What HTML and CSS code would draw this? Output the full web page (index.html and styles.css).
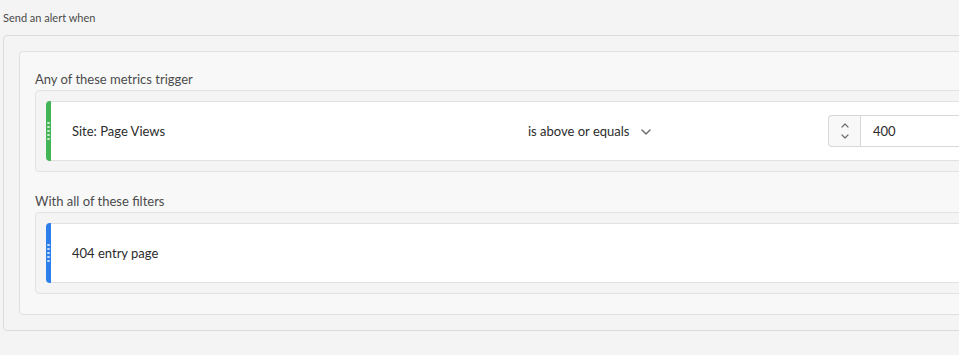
FILE: index.html
```html
<!DOCTYPE html>
<html>
<head>
<meta charset="utf-8">
<link rel="stylesheet" href="styles.css">
</head>
<body>
<div class="page">
  <div class="heading">Send an alert when</div>
  <div class="outer">
    <div class="inner">
      <div class="section-title first">Any of these metrics trigger</div>
      <div class="well">
        <div class="card">
          <div class="grip green"><span></span><span></span><span></span><span></span><span></span></div>
          <div class="card-label">Site: Page Views</div>
          <div class="dropdown">
            <span>is above or equals</span>
            <svg class="chev" width="10" height="6" viewBox="0 0 10 6"><path d="M1 1l4 4 4-4" fill="none" stroke="#6e6e6e" stroke-width="1.5" stroke-linecap="round" stroke-linejoin="round"/></svg>
          </div>
          <div class="stepper">
            <div class="step-btns">
              <svg width="8" height="5" viewBox="0 0 8 5"><path d="M1 4l3-3 3 3" fill="none" stroke="#6e6e6e" stroke-width="1.2" stroke-linecap="round" stroke-linejoin="round"/></svg>
              <svg width="8" height="5" viewBox="0 0 8 5"><path d="M1 1l3 3 3-3" fill="none" stroke="#6e6e6e" stroke-width="1.2" stroke-linecap="round" stroke-linejoin="round"/></svg>
            </div>
            <div class="step-input">400</div>
          </div>
        </div>
      </div>
      <div class="section-title">With all of these filters</div>
      <div class="well">
        <div class="card">
          <div class="grip blue"><span></span><span></span><span></span><span></span><span></span></div>
          <div class="card-label">404 entry page</div>
        </div>
      </div>
    </div>
  </div>
</div>
</body>
</html>
```
FILE: styles.css
```css
html, body {
  margin: 0;
  padding: 0;
  background: #f4f4f4;
  overflow: hidden;
}
.page {
  width: 1100px;
  font-family: "Lato", "Open Sans", sans-serif;
  color: #4b4b4b;
  padding-left: 3px;
}
.heading {
  font-size: 11px;
  line-height: 14px;
  padding-top: 11px;
  height: 24px;
}
.outer {
  border: 1px solid #dcdcdc;
  border-radius: 4px;
  background: #f4f4f4;
  padding: 15px 0 15px 15px;
}
.inner {
  border: 1px solid #e0e0e0;
  border-radius: 4px;
  background: #f8f8f8;
  padding: 0 0 20px 15px;
}
.section-title {
  font-size: 13px;
  line-height: 18px;
  color: #4b4b4b;
  padding-top: 20px;
  margin-bottom: 2px;
}
.section-title.first {
  padding-top: 18px;
}
.well {
  border: 1px solid #e3e3e3;
  border-radius: 4px;
  background: #f4f4f4;
  padding: 10px 0 10px 10px;
}
.card {
  height: 58px;
  background: #fff;
  border: 1px solid #e1e1e1;
  border-left: none;
  border-radius: 4px;
  display: flex;
  align-items: center;
  font-size: 13px;
  color: #2c2c2c;
}
.grip {
  align-self: stretch;
  width: 5px;
  margin: -1px 0;
  border-radius: 4px 0 0 4px;
  display: flex;
  flex-direction: column;
  align-items: center;
  justify-content: center;
  gap: 1.5px;
}
.grip span {
  width: 2.5px;
  height: 2.5px;
  border-radius: 50%;
  background: rgba(255,255,255,0.7);
}
.grip.green { background: #44b556; }
.grip.blue { background: #2d80eb; }
.card-label {
  padding-left: 21px;
  box-sizing: border-box;
  flex: 0 0 477px;
}
.dropdown {
  flex: 0 0 300px;
  display: flex;
  align-items: center;
  gap: 12px;
}
.chev { margin-top: 1px; }
.stepper {
  display: flex;
  height: 32px;
}
.step-btns {
  width: 31px;
  border: 1px solid #d8d8d8;
  border-right: none;
  border-radius: 4px 0 0 4px;
  background: #f8f8f8;
  display: flex;
  flex-direction: column;
  align-items: center;
  justify-content: center;
  gap: 6px;
}
.step-input {
  width: 200px;
  border: 1px solid #d8d8d8;
  background: #fff;
  display: flex;
  align-items: center;
  padding-left: 12px;
  font-size: 13px;
  color: #2c2c2c;
}
```
